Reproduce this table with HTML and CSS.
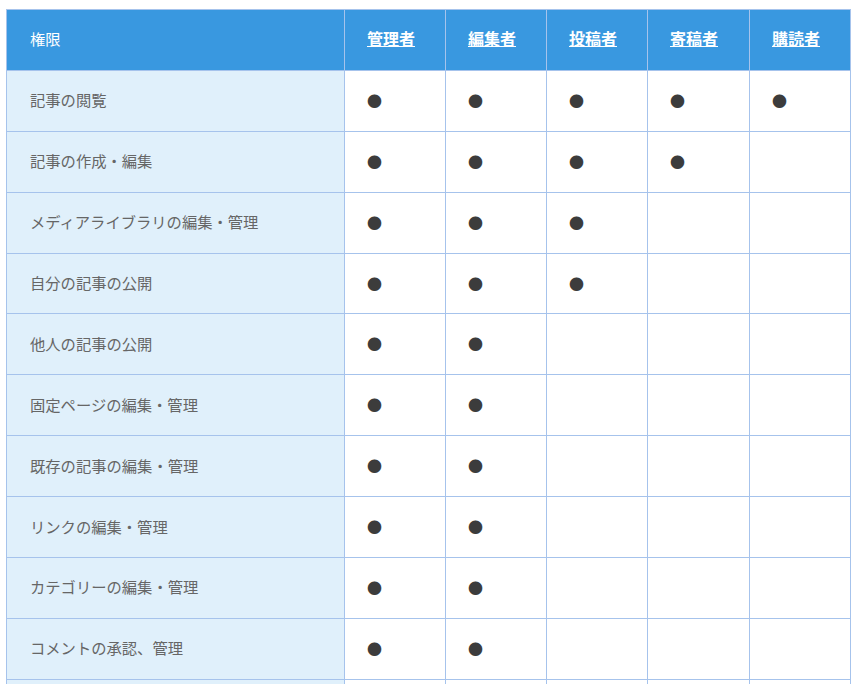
FILE: index.html
```html
<!DOCTYPE html>
<html lang="ja">
<head>
<meta charset="utf-8">
<title>権限表</title>
<link rel="stylesheet" href="styles.css">
</head>
<body>
<table class="roles">
  <colgroup>
    <col class="c-perm">
    <col class="c-role">
    <col class="c-role">
    <col class="c-role">
    <col class="c-role-w">
    <col class="c-role">
  </colgroup>
  <thead>
    <tr>
      <th class="h-perm">権限</th>
      <th><a href="#">管理者</a></th>
      <th><a href="#">編集者</a></th>
      <th><a href="#">投稿者</a></th>
      <th><a href="#">寄稿者</a></th>
      <th><a href="#">購読者</a></th>
    </tr>
  </thead>
  <tbody>
    <tr><td class="perm">記事の閲覧</td><td class="dot">●</td><td class="dot">●</td><td class="dot">●</td><td class="dot">●</td><td class="dot">●</td></tr>
    <tr><td class="perm">記事の作成・編集</td><td class="dot">●</td><td class="dot">●</td><td class="dot">●</td><td class="dot">●</td><td></td></tr>
    <tr><td class="perm">メディアライブラリの編集・管理</td><td class="dot">●</td><td class="dot">●</td><td class="dot">●</td><td></td><td></td></tr>
    <tr><td class="perm">自分の記事の公開</td><td class="dot">●</td><td class="dot">●</td><td class="dot">●</td><td></td><td></td></tr>
    <tr><td class="perm">他人の記事の公開</td><td class="dot">●</td><td class="dot">●</td><td></td><td></td><td></td></tr>
    <tr><td class="perm">固定ページの編集・管理</td><td class="dot">●</td><td class="dot">●</td><td></td><td></td><td></td></tr>
    <tr><td class="perm">既存の記事の編集・管理</td><td class="dot">●</td><td class="dot">●</td><td></td><td></td><td></td></tr>
    <tr><td class="perm">リンクの編集・管理</td><td class="dot">●</td><td class="dot">●</td><td></td><td></td><td></td></tr>
    <tr><td class="perm">カテゴリーの編集・管理</td><td class="dot">●</td><td class="dot">●</td><td></td><td></td><td></td></tr>
    <tr><td class="perm">コメントの承認、管理</td><td class="dot">●</td><td class="dot">●</td><td></td><td></td><td></td></tr>
    <tr><td class="perm"></td><td></td><td></td><td></td><td></td><td></td></tr>
  </tbody>
</table>
</body>
</html>
```

FILE: styles.css
```css
html, body {
  background: #ffffff;
}
body {
  margin: 9px 6px;
  font-family: "Noto Sans CJK JP", "Noto Sans", sans-serif;
  font-size: 15.3px;
  color: #666666;
}
.roles {
  border-collapse: collapse;
  table-layout: fixed;
  width: 845px;
}
.c-perm { width: 338px; }
.c-role { width: 101px; }
.c-role-w { width: 102px; }
.roles th,
.roles td {
  border: 1px solid #a6c3ec;
  height: 60.9px;
  padding: 0 22px;
  box-sizing: border-box;
  vertical-align: middle;
  line-height: 20px;
  text-align: left;
}
.roles th {
  background: #3998e0;
  color: #ffffff;
  font-weight: 700;
  font-size: 16px;
  padding-bottom: 3px;
}
.roles th.h-perm {
  font-weight: 400;
  font-size: 15.3px;
  padding-left: 23px;
}
.roles th a {
  color: #ffffff;
  text-decoration: underline;
}
.roles td {
  background: #ffffff;
}
.roles td.perm {
  background: #e0f0fb;
  padding-left: 23px;
  padding-bottom: 3px;
}
.roles td.dot {
  color: #3c3c3c;
  font-size: 15px;
}
```
